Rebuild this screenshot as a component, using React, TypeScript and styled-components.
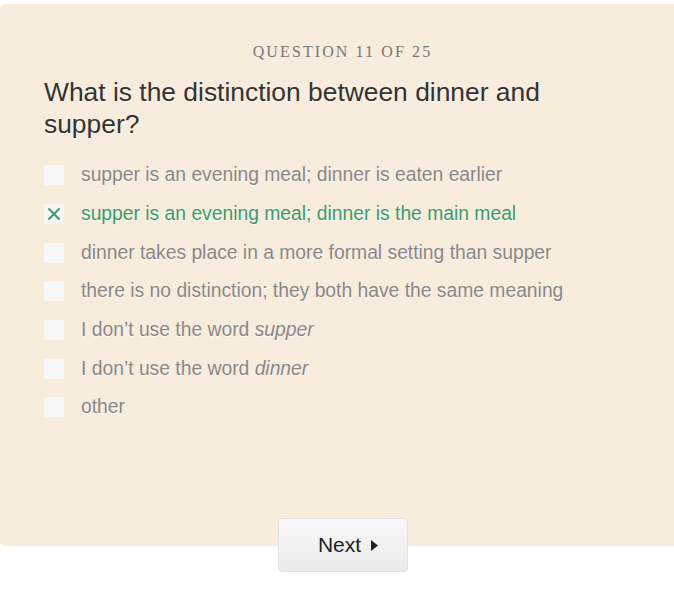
import React from "react";
import styled, { createGlobalStyle } from "styled-components";

const Global = createGlobalStyle`
  html, body { margin: 0; padding: 0; background: #fff; overflow-x: hidden; }
  body { font-family: "Liberation Sans", Arial, sans-serif; }
`;

const Page = styled.div`
  width: 685px;
  padding-top: 4px;
`;

const Panel = styled.div`
  background: #f8ecdd;
  border-radius: 5px;
  height: 542px;
  box-sizing: border-box;
  padding: 38px 44px 0 44px;
  display: flex;
  flex-direction: column;
`;

const Counter = styled.div`
  font-family: "Liberation Serif", "Times New Roman", serif;
  font-size: 16px;
  letter-spacing: 2.1px;
  color: #777;
  text-align: center;
  line-height: 20px;
`;

const Question = styled.h2`
  margin: 14px 0 0 0;
  max-width: 520px;
  font-weight: normal;
  font-size: 26.4px;
  line-height: 32px;
  color: #333;
  text-shadow: 0 1px 0 rgba(255, 255, 255, 0.7);
`;

const Options = styled.ul`
  list-style: none;
  margin: 16px 0 0 0;
  padding: 0;
  display: flex;
  flex-direction: column;
`;

const Option = styled.li<{ $selected?: boolean }>`
  display: flex;
  align-items: center;
  height: 38.7px;
  font-size: 19.3px;
  color: ${(p) => (p.$selected ? "#3a9b6f" : "#888")};
  text-shadow: 0 1px 0 rgba(255, 255, 255, 0.8);
`;

const Box = styled.span`
  width: 20px;
  height: 20px;
  background: #f7f7f7;
  flex: none;
  margin-right: 17px;
  display: flex;
  align-items: center;
  justify-content: center;
`;

const Footer = styled.div`
  display: flex;
  justify-content: center;
  margin-top: -28px;
`;

const NextButton = styled.button`
  width: 130px;
  height: 54px;
  border: 1px solid #e2e2e2;
  border-radius: 4px;
  background: linear-gradient(#f8f8f8, #ebebeb);
  font-family: "Liberation Sans", Arial, sans-serif;
  font-size: 21px;
  color: #222;
  display: flex;
  align-items: center;
  justify-content: center;
  gap: 10px;
  padding: 0 0 0 11px;
`;

const options: { text: React.ReactNode; selected?: boolean }[] = [
  { text: "supper is an evening meal; dinner is eaten earlier" },
  { text: "supper is an evening meal; dinner is the main meal", selected: true },
  { text: "dinner takes place in a more formal setting than supper" },
  { text: "there is no distinction; they both have the same meaning" },
  { text: <>I don’t use the word <em>supper</em></> },
  { text: <>I don’t use the word <em>dinner</em></> },
  { text: "other" },
];

export default function App() {
  return (
    <>
      <Global />
      <Page>
        <Panel>
          <Counter>QUESTION 11 OF 25</Counter>
          <Question>What is the distinction between dinner and supper?</Question>
          <Options>
            {options.map((o, i) => (
              <Option key={i} $selected={o.selected}>
                <Box>
                  {o.selected && (
                    <svg width="16" height="16" viewBox="0 0 16 16">
                      <path d="M2.5 2.5 L13.5 13.5 M13.5 2.5 L2.5 13.5" stroke="#3a9b6f" strokeWidth="2" />
                    </svg>
                  )}
                </Box>
                <span>{o.text}</span>
              </Option>
            ))}
          </Options>
        </Panel>
        <Footer>
          <NextButton>
            Next
            <svg width="7" height="11" viewBox="0 0 7 11">
              <path d="M0 0 L7 5.5 L0 11 Z" fill="#222" />
            </svg>
          </NextButton>
        </Footer>
      </Page>
    </>
  );
}
